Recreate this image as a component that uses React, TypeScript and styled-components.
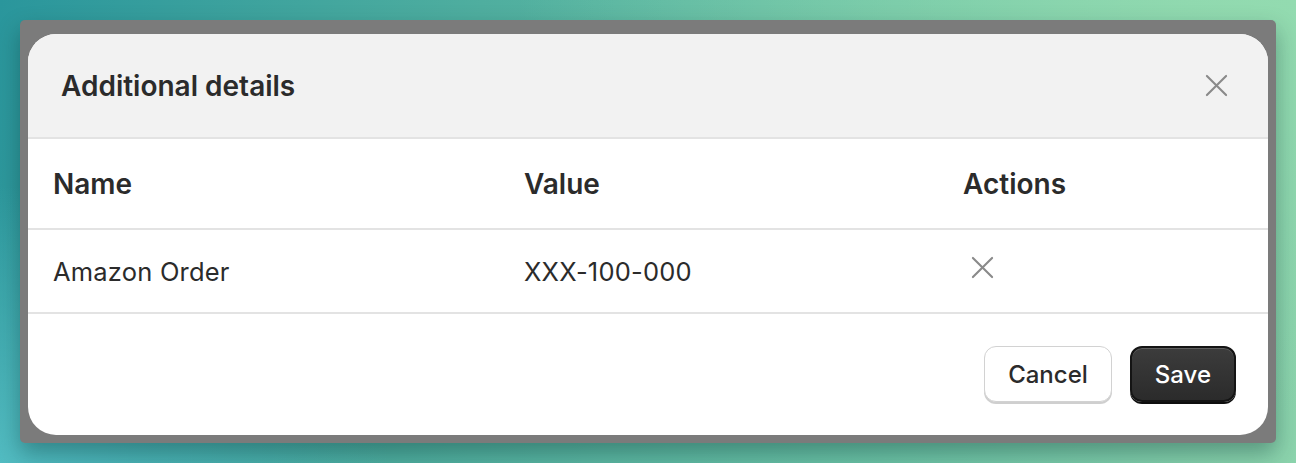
import styled, { createGlobalStyle } from 'styled-components';

const GlobalStyle = createGlobalStyle`
  html, body {
    margin: 0;
    padding: 0;
  }

  body {
    width: 1296px;
    height: 463px;
    overflow: hidden;
    font-family: Inter, 'Noto Sans', 'Liberation Sans', sans-serif;
    background:
      radial-gradient(ellipse 60% 90% at 100% 0%, #93dbb0 0%, rgba(147, 219, 176, 0) 100%),
      radial-gradient(ellipse 30% 60% at 0% 100%, #52bcc2 0%, rgba(82, 188, 194, 0) 100%),
      linear-gradient(100deg, #2a969c 0%, #4fae9f 35%, #6cc3a6 70%, #8cd4ad 100%);
  }
`;

const rows = [{ name: 'Amazon Order', value: 'XXX-100-000' }];

function CloseIcon({ size = 24 }: { size?: number }) {
  return (
    <svg width={size} height={size} viewBox="0 0 24 24" fill="none">
      <path
        d="M2 2L22 22M22 2L2 22"
        stroke="#8a8a8a"
        strokeWidth="2.2"
        strokeLinecap="round"
      />
    </svg>
  );
}

export default function App() {
  return (
    <>
      <GlobalStyle />
      <Page>
        <Backdrop>
          <Modal>
            <Header>
              <Title>Additional details</Title>
              <IconButton aria-label="Close">
                <CloseIcon size={23} />
              </IconButton>
            </Header>

            <Table>
              <colgroup>
                <col style={{ width: 471 }} />
                <col style={{ width: 439 }} />
                <col />
              </colgroup>
              <thead>
                <tr>
                  <HeadCell>Name</HeadCell>
                  <HeadCell>Value</HeadCell>
                  <HeadCell>Actions</HeadCell>
                </tr>
              </thead>
              <tbody>
                {rows.map((row) => (
                  <tr key={row.name}>
                    <Cell>{row.name}</Cell>
                    <Cell>{row.value}</Cell>
                    <Cell>
                      <RowAction aria-label="Remove">
                        <CloseIcon size={23} />
                      </RowAction>
                    </Cell>
                  </tr>
                ))}
              </tbody>
            </Table>

            <Footer>
              <Button>Cancel</Button>
              <Button $primary>Save</Button>
            </Footer>
          </Modal>
        </Backdrop>
      </Page>
    </>
  );
}

const Page = styled.div`
  box-sizing: border-box;
  width: 1296px;
  height: 463px;
  padding: 20px;
`;

const Backdrop = styled.div`
  box-sizing: border-box;
  height: 100%;
  padding: 14px 8px 8px;
  background-color: #7b7b7b;
  border-radius: 5px;
  box-shadow: 0 10px 22px rgba(0, 40, 40, 0.35);
`;

const Modal = styled.div`
  height: 100%;
  display: flex;
  flex-direction: column;
  overflow: hidden;
  background-color: #ffffff;
  border-radius: 28px;
`;

const Header = styled.div`
  height: 103px;
  flex-shrink: 0;
  display: flex;
  align-items: center;
  justify-content: space-between;
  padding: 0 40px 0 33px;
  background-color: #f2f2f2;
  border-bottom: 2px solid #e3e3e3;
`;

const Title = styled.h2`
  margin: 0;
  font-size: 28px;
  font-weight: 600;
  color: #2b2b2b;
`;

const IconButton = styled.button`
  display: flex;
  padding: 0;
  border: none;
  background: none;
  cursor: pointer;
`;

const Table = styled.table`
  width: 100%;
  table-layout: fixed;
  border-collapse: collapse;
`;

const HeadCell = styled.th`
  height: 89px;
  padding: 0 0 0 25px;
  text-align: left;
  font-size: 28px;
  font-weight: 600;
  color: #2b2b2b;
  border-bottom: 2px solid #e3e3e3;
`;

const Cell = styled.td`
  height: 82px;
  padding: 0 0 0 25px;
  font-size: 25.5px;
  font-weight: 400;
  color: #2b2b2b;
  border-bottom: 2px solid #e3e3e3;
  letter-spacing: 0.2px;
`;

const RowAction = styled.button`
  display: flex;
  margin: -7px 0 0 8px;
  padding: 0;
  border: none;
  background: none;
  cursor: pointer;
`;

const Footer = styled.div`
  flex: 1;
  display: flex;
  align-items: flex-start;
  justify-content: flex-end;
  gap: 18px;
  padding: 32px 32px 0;
`;

const Button = styled.button<{ $primary?: boolean }>`
  height: 56px;
  padding: 0 23px;
  border-radius: 12px;
  font-family: inherit;
  font-size: 24px;
  font-weight: 500;
  cursor: pointer;
  color: ${({ $primary }) => ($primary ? '#ffffff' : '#2b2b2b')};
  background: ${({ $primary }) =>
    $primary ? 'linear-gradient(180deg, #3c3c3c 0%, #2b2b2b 100%)' : '#ffffff'};
  border: ${({ $primary }) => ($primary ? '2px solid #141414' : '1.5px solid #d2d2d2')};
  box-shadow: ${({ $primary }) =>
    $primary
      ? 'inset 0 1px 0 rgba(255, 255, 255, 0.18), 0 2px 0 #0e0e0e'
      : '0 2px 0 #cfcfcf'};
`;
